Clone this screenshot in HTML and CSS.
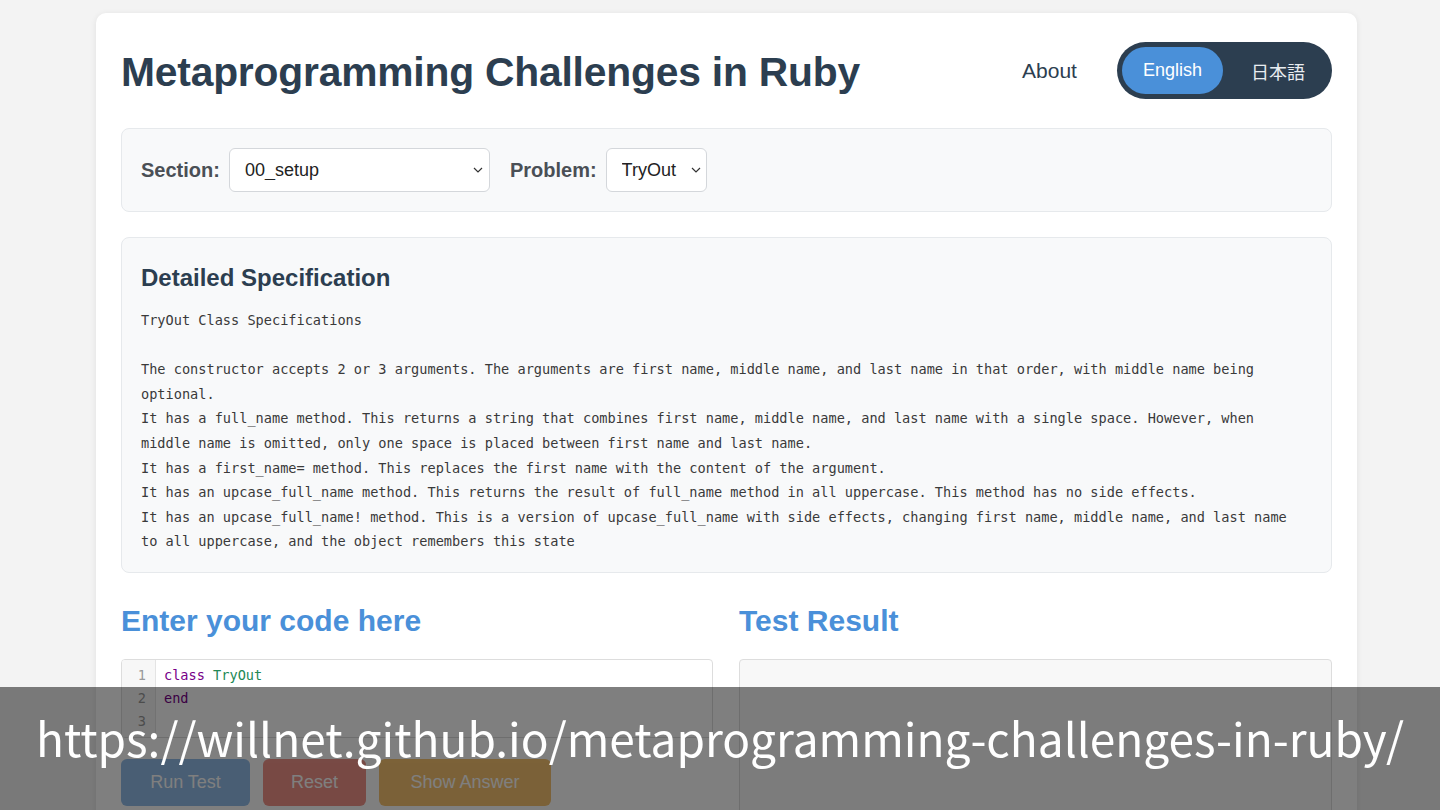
FILE: index.html
```html
<!DOCTYPE html>
<html lang="en">
<head>
<meta charset="utf-8">
<title>Metaprogramming Challenges in Ruby</title>
<link rel="stylesheet" href="styles.css">
</head>
<body>
<div class="card">
  <header class="header">
    <h1 class="title">Metaprogramming Challenges in Ruby</h1>
    <nav class="nav">
      <a class="about" href="#">About</a>
      <div class="lang">
        <button class="lang-btn active">English</button>
        <button class="lang-btn">日本語</button>
      </div>
    </nav>
  </header>

  <section class="selector">
    <label class="sel-label">Section:</label>
    <div class="select-wrap sec">
      <select class="select"><option>00_setup</option></select>
      <svg class="chev" width="10" height="6" viewBox="0 0 10 6"><path d="M1 1l4 4 4-4" fill="none" stroke="#333" stroke-width="1.2"/></svg>
    </div>
    <label class="sel-label">Problem:</label>
    <div class="select-wrap prob">
      <select class="select"><option>TryOut</option></select>
      <svg class="chev" width="10" height="6" viewBox="0 0 10 6"><path d="M1 1l4 4 4-4" fill="none" stroke="#333" stroke-width="1.2"/></svg>
    </div>
  </section>

  <section class="spec">
    <h2 class="spec-title">Detailed Specification</h2>
<pre class="spec-text">TryOut Class Specifications

The constructor accepts 2 or 3 arguments. The arguments are first name, middle name, and last name in that order, with middle name being
optional.
It has a full_name method. This returns a string that combines first name, middle name, and last name with a single space. However, when
middle name is omitted, only one space is placed between first name and last name.
It has a first_name= method. This replaces the first name with the content of the argument.
It has an upcase_full_name method. This returns the result of full_name method in all uppercase. This method has no side effects.
It has an upcase_full_name! method. This is a version of upcase_full_name with side effects, changing first name, middle name, and last name
to all uppercase, and the object remembers this state</pre>
  </section>

  <section class="work">
    <div class="col">
      <h2 class="col-title">Enter your code here</h2>
      <div class="editor">
        <div class="gutter"><div>1</div><div>2</div><div>3</div></div>
        <div class="code"><div><span class="kw">class</span> <span class="def">TryOut</span></div><div><span class="kw">end</span></div><div>&nbsp;</div></div>
      </div>
      <div class="buttons">
        <button class="btn run">Run Test</button>
        <button class="btn reset">Reset</button>
        <button class="btn answer">Show Answer</button>
      </div>
    </div>
    <div class="col">
      <h2 class="col-title">Test Result</h2>
      <div class="result"></div>
    </div>
  </section>
</div>

<div class="caption">https://willnet.github.io/metaprogramming-challenges-in-ruby/</div>
</body>
</html>
```

FILE: styles.css
```css
* { box-sizing: border-box; }
html, body { margin: 0; padding: 0; }
body {
  background: #f3f3f3;
  font-family: "Liberation Sans", Arial, sans-serif;
  color: #2c3e50;
  height: 810px;
  overflow: hidden;
}
.card {
  width: 1261px;
  margin: 13px 0 0 96px;
  background: #fff;
  border-radius: 10px;
  box-shadow: 0 1px 6px rgba(0,0,0,0.08);
  padding: 29px 25px 40px;
}
.header {
  display: flex;
  align-items: center;
  justify-content: space-between;
  height: 57px;
}
.title {
  margin: 0;
  padding-top: 3px;
  font-size: 40.8px;
  font-weight: 700;
  color: #2c3e50;
  letter-spacing: -0.2px;
}
.nav { display: flex; align-items: center; gap: 40px; }
.about {
  color: #2c3e50;
  text-decoration: none;
  font-size: 21px;
}
.lang {
  display: flex;
  background: #2c3e50;
  border-radius: 30px;
  padding: 5px;
  gap: 6px;
}
.lang-btn {
  border: 0;
  background: transparent;
  color: #e8ecf0;
  font-family: "Liberation Sans", "Noto Sans CJK JP", sans-serif;
  font-size: 18px;
  height: 47px;
  padding: 0 22px;
  border-radius: 24px;
}
.lang-btn.active { background: #4a90d9; color: #fff; padding: 0 21px; }

.selector {
  margin-top: 29px;
  background: #f8f9fa;
  border: 1px solid #e6e9ec;
  border-radius: 8px;
  padding: 19px;
  display: flex;
  align-items: center;
}
.sel-label {
  font-size: 20px;
  font-weight: 700;
  color: #4a4f55;
  margin-right: 9px;
}
.select-wrap { position: relative; margin-right: 20px; }
.select-wrap.sec { width: 261px; }
.select-wrap.prob { width: 101px; }
.select {
  appearance: none;
  -webkit-appearance: none;
  width: 100%;
  height: 44px;
  border: 1px solid #d4d7db;
  border-radius: 6px;
  background: #fff;
  font-family: "Liberation Sans", Arial, sans-serif;
  font-size: 18px;
  color: #222;
  padding: 0 15px;
}
.chev { position: absolute; right: 6px; top: 19px; }
.select-wrap.sec .chev { right: 7px; }

.spec {
  margin-top: 25px;
  background: #f8f9fa;
  border: 1px solid #e6e9ec;
  border-radius: 8px;
  padding: 25px 19px 18px;
}
.spec-title {
  margin: 0 0 16px;
  font-size: 24px;
  line-height: 29px;
  font-weight: 700;
  color: #2c3e50;
}
.spec-text {
  margin: 0;
  font-family: "DejaVu Sans Mono", "Liberation Mono", monospace;
  font-size: 13.6px;
  line-height: 24.6px;
  color: #3a3a3a;
  white-space: pre;
}

.work {
  margin-top: 30px;
  display: grid;
  grid-template-columns: 592px 593px;
  gap: 26px;
}
.col-title {
  margin: 0 0 20px;
  font-size: 30px;
  line-height: 36px;
  font-weight: 700;
  color: #4a90d9;
}
.editor {
  display: flex;
  border: 1px solid #ddd;
  border-radius: 4px;
  background: #fff;
  font-family: "DejaVu Sans Mono", "Liberation Mono", monospace;
  font-size: 13.6px;
  line-height: 23px;
  overflow: hidden;
}
.gutter {
  width: 34px;
  background: #f7f7f7;
  border-right: 1px solid #e4e4e4;
  color: #999;
  text-align: right;
  padding: 4px 9px 4px 0;
}
.code { padding: 4px 8px; flex: 1; }
.kw { color: #770088; }
.def { color: #228855; }
.buttons { display: flex; gap: 13px; margin-top: 21px; }
.btn {
  height: 47px;
  border: 0;
  border-radius: 6px;
  color: #fff;
  font-family: "Liberation Sans", Arial, sans-serif;
  font-size: 18px;
  padding: 0 25px;
  opacity: 0.6;
}
.btn.run { background: #4a90d9; width: 129px; }
.btn.reset { background: #e74c3c; width: 103px; }
.btn.answer { background: #f39c12; width: 172px; }
.result {
  height: 200px;
  background: #f8f8f8;
  border: 1px solid #ddd;
  border-radius: 4px;
}

.caption {
  position: fixed;
  left: 0;
  right: 0;
  bottom: 0;
  height: 123px;
  background: rgba(0,0,0,0.5);
  color: #fff;
  text-align: center;
  font-family: "Noto Sans CJK JP", "Noto Sans", sans-serif;
  font-size: 46px;
  line-height: 60px;
  padding-top: 20px;
  white-space: nowrap;
}
```
